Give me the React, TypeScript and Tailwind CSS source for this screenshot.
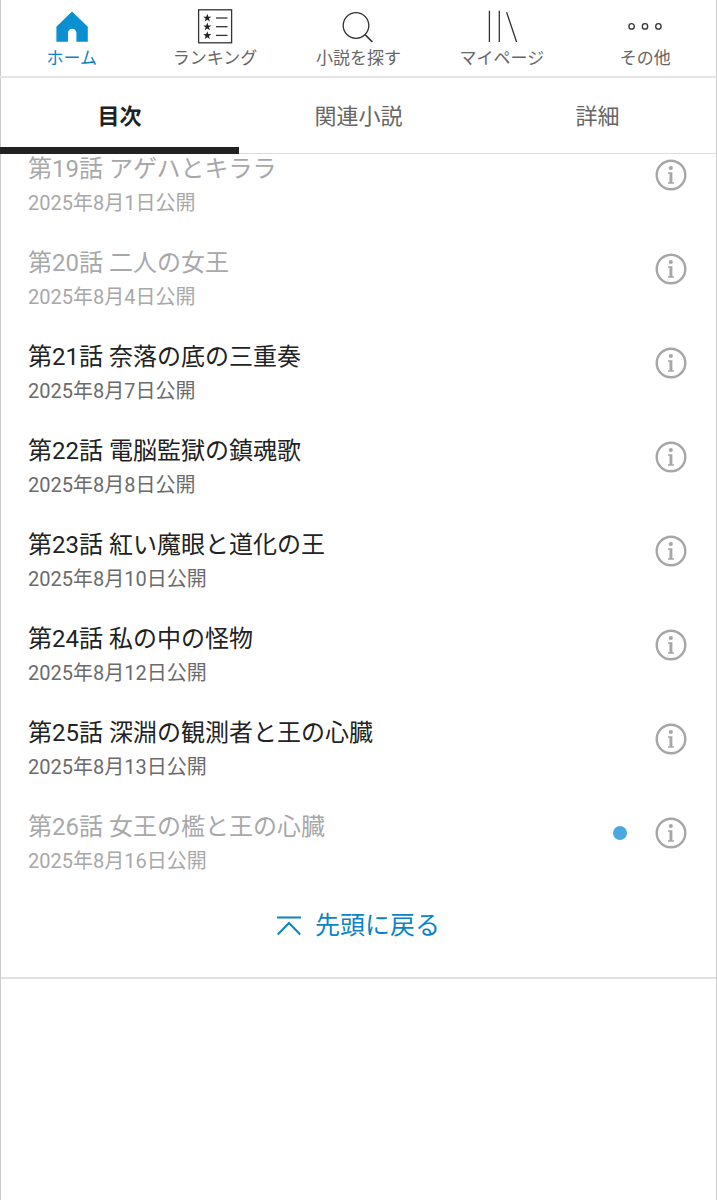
import type { ReactNode } from 'react';

type Episode = {
  number: number;
  title: string;
  date: string;
  read?: boolean;
  isNew?: boolean;
};

const episodes: Episode[] = [
  { number: 19, title: 'アゲハとキララ', date: '2025年8月1日', read: true },
  { number: 20, title: '二人の女王', date: '2025年8月4日', read: true },
  { number: 21, title: '奈落の底の三重奏', date: '2025年8月7日' },
  { number: 22, title: '電脳監獄の鎮魂歌', date: '2025年8月8日' },
  { number: 23, title: '紅い魔眼と道化の王', date: '2025年8月10日' },
  { number: 24, title: '私の中の怪物', date: '2025年8月12日' },
  { number: 25, title: '深淵の観測者と王の心臓', date: '2025年8月13日' },
  { number: 26, title: '女王の檻と王の心臓', date: '2025年8月16日', read: true, isNew: true },
];

const tabs = ['目次', '関連小説', '詳細'];

function NavIcon({ children }: { children: ReactNode }) {
  return (
    <svg
      viewBox="0 0 36 36"
      className="size-9"
      fill="none"
      stroke="#333"
      strokeWidth="1.3"
      aria-hidden="true"
    >
      {children}
    </svg>
  );
}

function HomeIcon() {
  return (
    <NavIcon>
      <path
        d="M18 3.5 33.8 18.8V33.8H22.4V25a4.2 4.2 0 0 0-8.4 0v8.8H2.4V18.8z"
        fill="#0a90d0"
        stroke="none"
      />
    </NavIcon>
  );
}

function RankingIcon() {
  return (
    <NavIcon>
      <rect x="1.6" y="1.8" width="33" height="33" />
      {[10, 18.7, 27.4].map((y) => (
        <g key={y} transform={`translate(10.3 ${y})`}>
          <path
            d="M0-4.2 1.05-1.3 4.1-1.25 1.65.6 2.55 3.5 0 1.75-2.55 3.5-1.65.6-4.1-1.25-1.05-1.3z"
            fill="#222"
            stroke="none"
          />
          <path d="M8.7 0H20.2" />
        </g>
      ))}
    </NavIcon>
  );
}

function SearchIcon() {
  return (
    <NavIcon>
      <circle cx="15" cy="17.5" r="12.8" />
      <path d="M24 26.6 31.4 34" strokeWidth="1.7" />
    </NavIcon>
  );
}

function LibraryIcon() {
  return (
    <NavIcon>
      <path d="M5.4 2.8V34M15.3 2.8V34M22.6 4.2 32.6 34" />
    </NavIcon>
  );
}

function MoreIcon() {
  return (
    <NavIcon>
      <circle cx="4.6" cy="18.4" r="2.7" />
      <circle cx="18" cy="18.4" r="2.7" />
      <circle cx="31.4" cy="18.4" r="2.7" />
    </NavIcon>
  );
}

function InfoIcon() {
  return (
    <svg viewBox="0 0 32 32" className="size-8" aria-hidden="true">
      <circle cx="16" cy="16" r="14.3" fill="none" stroke="#a6a6a6" strokeWidth="2.4" />
      <circle cx="15.8" cy="9" r="2.1" fill="#a6a6a6" />
      <path
        d="M13 13.2H17.4V23.2H18.9V24.7H13V23.2H14.5V14.7H13z"
        fill="#a6a6a6"
      />
    </svg>
  );
}

const navItems = [
  { label: 'ホーム', icon: <HomeIcon />, active: true },
  { label: 'ランキング', icon: <RankingIcon /> },
  { label: '小説を探す', icon: <SearchIcon /> },
  { label: 'マイページ', icon: <LibraryIcon /> },
  { label: 'その他', icon: <MoreIcon /> },
];

function EpisodeRow({ number, title, date, read, isNew }: Episode) {
  return (
    <li className="flex items-start">
      <a href={`#episode-${number}`} className="min-w-0 flex-1">
        <p className={`text-2xl leading-[30px] ${read ? 'text-[#a8a8a8]' : 'text-[#222]'}`}>
          第{number}話 {title}
        </p>
        <p className={`mt-[5px] text-xl leading-7 ${read ? 'text-[#a8a8a8]' : 'text-[#6b6b6b]'}`}>
          {date}公開
        </p>
      </a>
      <div className="mt-[5px] flex items-center gap-7">
        {isNew && <span className="size-3.5 rounded-full bg-[#4aa8e0]" />}
        <button type="button" aria-label={`第${number}話の情報`}>
          <InfoIcon />
        </button>
      </div>
    </li>
  );
}

export default function App() {
  return (
    <div
      lang="ja"
      className="min-h-screen border-x border-[#ccc] bg-white font-[Roboto,'Noto_Sans_CJK_JP',sans-serif]"
    >
      {/* Site navigation */}
      <nav className="-mx-px flex border-b-2 border-[#e4e4e4] pt-2 pb-1.5">
        {navItems.map((item) => (
          <a
            key={item.label}
            href="#"
            className={`flex flex-1 basis-0 flex-col items-center gap-0.5 text-[17px] leading-6 whitespace-nowrap ${
              item.active ? 'text-[#0a84c4]' : 'text-[#666]'
            }`}
          >
            {item.icon}
            {item.label}
          </a>
        ))}
      </nav>

      {/* Novel tabs */}
      <div role="tablist" className="-mx-px grid grid-cols-3">
        {tabs.map((tab, i) => (
          <button
            key={tab}
            type="button"
            role="tab"
            aria-selected={i === 0}
            className={`h-19 pt-0.5 text-[22px] leading-8 ${
              i === 0
                ? 'border-b-[7px] border-[#222] pt-2 font-bold text-[#222]'
                : 'border-b border-[#ddd] text-[#666]'
            }`}
          >
            {tab}
          </button>
        ))}
      </div>

      {/* Table of contents */}
      <main className="border-b-2 border-[#e0e0e0] pb-[31px]">
        <ol className="flex flex-col gap-[31px] pr-[29px] pl-[27px]">
          {episodes.map((episode) => (
            <EpisodeRow key={episode.number} {...episode} />
          ))}
        </ol>
        <div className="mt-[31px] flex justify-center">
          <a href="#" className="flex items-center gap-3.5 text-[25px] leading-10 text-[#0a84c4]">
            <svg
              viewBox="0 0 24 24"
              className="size-6"
              fill="none"
              stroke="currentColor"
              strokeWidth="2"
              aria-hidden="true"
            >
              <path d="M0 3.5H24M.8 20.5 12 9 23.2 20.5" />
            </svg>
            先頭に戻る
          </a>
        </div>
      </main>
    </div>
  );
}
